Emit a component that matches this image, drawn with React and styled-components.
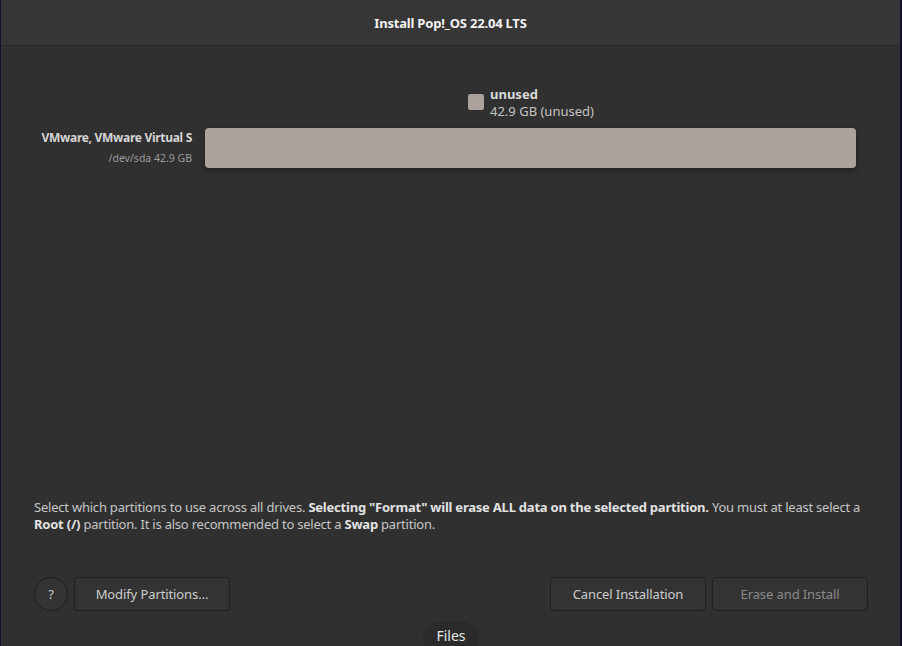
import React from "react";
import styled, { createGlobalStyle } from "styled-components";

const Global = createGlobalStyle`
  html, body { margin: 0; padding: 0; background: #12122a; }
  body { font-family: "Noto Sans", "Open Sans", sans-serif; }
  #root { height: 646px; }
`;

const Desktop = styled.div`
  height: 646px;
  padding-left: 1px;
  display: flex;
  overflow: hidden;
`;

const Window = styled.div`
  position: relative;
  width: 899px;
  height: 646px;
  background: #303030;
  display: flex;
  flex-direction: column;
`;

const Header = styled.header`
  height: 45px;
  flex: none;
  background: #363636;
  border-bottom: 1px solid #2a2a2a;
  display: flex;
  align-items: center;
  justify-content: center;
`;

const Title = styled.h1`
  margin: 0;
  font-size: 13px;
  font-weight: 700;
  color: #f2f2f2;
  letter-spacing: -0.2px;
`;

const Content = styled.main`
  flex: 1;
  display: flex;
  flex-direction: column;
  padding: 40px 30px 0 33px;
`;

const Legend = styled.div`
  display: flex;
  align-items: flex-start;
  gap: 6px;
  margin-left: 434px;
  height: 42px;
`;

const Swatch = styled.div`
  width: 16px;
  height: 16px;
  margin-top: 8px;
  border-radius: 2px;
  background: ${(p) => p.color};
`;

const LegendText = styled.div`
  display: flex;
  flex-direction: column;
  line-height: 17px;
  font-size: 13px;
`;

const LegendName = styled.span`
  font-weight: 700;
  color: #dadada;
`;

const LegendSize = styled.span`
  color: #c4c4c4;
`;

const DriveRow = styled.div`
  display: flex;
  align-items: flex-start;
  gap: 13px;
  padding-right: 14px;
`;

const DriveLabel = styled.div`
  width: 158px;
  text-align: right;
  display: flex;
  flex-direction: column;
  padding-top: 1px;
`;

const DriveName = styled.span`
  font-size: 12px;
  font-weight: 700;
  color: #d6d6d6;
  line-height: 18px;
  white-space: nowrap;
  letter-spacing: -0.3px;
`;

const DriveDev = styled.span`
  font-size: 10.5px;
  color: #9c9c9c;
  line-height: 16px;
  margin-top: 3px;
`;

const Bar = styled.div`
  flex: 1;
  height: 40px;
  display: flex;
  border-radius: 4px;
  overflow: hidden;
  box-shadow: 0 2px 6px rgba(0, 0, 0, 0.35);
`;

const Segment = styled.div`
  flex: ${(p) => p.grow};
  background: ${(p) => p.color};
`;

const Spacer = styled.div`
  flex: 1;
`;

const Description = styled.p`
  margin: 0 0 44px 0;
  font-size: 13px;
  line-height: 17px;
  color: #c6c6c6;
  letter-spacing: -0.22px;
  b { color: #e2e2e2; font-weight: 700; }
`;

const Footer = styled.div`
  display: flex;
  align-items: center;
  gap: 6px;
  padding-right: 2px;
  margin-bottom: 35px;
`;

const Button = styled.button`
  height: 34px;
  width: ${(p) => p.w}px;
  box-sizing: border-box;
  border: 1px solid #1f1f1f;
  border-radius: ${(p) => (p.round ? "50%" : "4px")};
  background: #333333;
  color: ${(p) => (p.disabled ? "#8a8a8a" : "#cdcdcd")};
  font-family: inherit;
  font-size: 13px;
  letter-spacing: -0.1px;
  padding: 0;
  cursor: pointer;
`;

const Tooltip = styled.div`
  position: absolute;
  left: 422px;
  top: 621px;
  width: 56px;
  height: 36px;
  border-radius: 18px;
  background: #2a2a2a;
  color: #e8e8e8;
  font-size: 14px;
  display: flex;
  justify-content: center;
  padding-top: 5px;
  box-sizing: border-box;
`;

export default function App() {
  return (
    <>
      <Global />
      <Desktop>
        <Window>
          <Header>
            <Title>Install Pop!_OS 22.04 LTS</Title>
          </Header>
          <Content>
            <Legend>
              <Swatch color="#aca29e" />
              <LegendText>
                <LegendName>unused</LegendName>
                <LegendSize>42.9 GB (unused)</LegendSize>
              </LegendText>
            </Legend>
            <DriveRow>
              <DriveLabel>
                <DriveName>VMware, VMware Virtual S</DriveName>
                <DriveDev>/dev/sda 42.9 GB</DriveDev>
              </DriveLabel>
              <Bar>
                <Segment grow={1} color="#aca29e" />
              </Bar>
            </DriveRow>
            <Spacer />
            <Description>
              Select which partitions to use across all drives.{" "}
              <b>Selecting "Format" will erase ALL data on the selected partition.</b>{" "}
              You must at least select a <b>Root (/)</b> partition. It is also
              recommended to select a <b>Swap</b> partition.
            </Description>
            <Footer>
              <Button round w={34}>?</Button>
              <Button w={156}>Modify Partitions…</Button>
              <Spacer />
              <Button w={156}>Cancel Installation</Button>
              <Button w={156} disabled>Erase and Install</Button>
            </Footer>
          </Content>
          <Tooltip>Files</Tooltip>
        </Window>
      </Desktop>
    </>
  );
}
